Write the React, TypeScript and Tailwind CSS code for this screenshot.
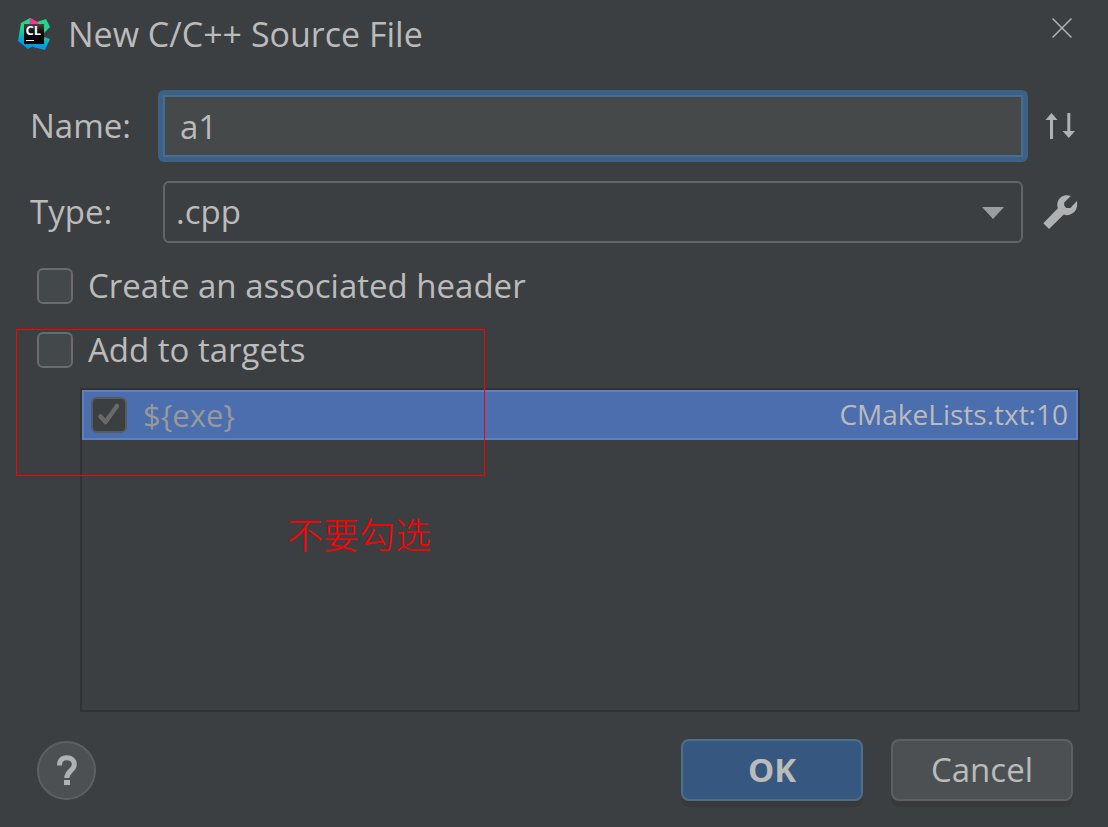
import { useState } from "react";
import type { InputHTMLAttributes } from "react";

function ClionLogo() {
  return (
    <svg viewBox="0 0 32 32" className="size-8 shrink-0" aria-hidden="true">
      <defs>
        <linearGradient id="leftSide" x1="0.4" y1="0" x2="0.3" y2="1">
          <stop offset="0.35" stopColor="#21d789" />
          <stop offset="0.8" stopColor="#009ae5" />
        </linearGradient>
        <linearGradient id="rightSide" x1="0.6" y1="0" x2="0.4" y2="1">
          <stop offset="0.4" stopColor="#21d789" />
          <stop offset="0.85" stopColor="#009ae5" />
        </linearGradient>
        <linearGradient id="face" x1="0" y1="0" x2="0" y2="1">
          <stop offset="0" stopColor="#444" />
          <stop offset="0.5" stopColor="#000" />
        </linearGradient>
      </defs>
      <path d="M12 0 3 5 0 23l10 8 7-4V3z" fill="url(#leftSide)" />
      <path d="m19 4 9-3 4 8-6 6v4l6 2-5 11-12-3-2-6 6-8z" fill="url(#rightSide)" />
      <path d="m12 0 8 4v6h-9z" fill="#ff318c" />
      <path d="M6 6h20v20H6z" fill="url(#face)" />
      <text x="7.5" y="17" fill="#fff" fontSize="13" fontWeight="700" fontFamily="Open Sans, sans-serif">
        CL
      </text>
      <path d="M8 22h8v1H8z" fill="#fff" />
    </svg>
  );
}

function CloseIcon() {
  return (
    <svg viewBox="0 0 20 20" className="size-5" fill="none" stroke="#afb1b3" strokeWidth="1.5" aria-hidden="true">
      <path d="m.5.5 19 19M19.500.5l-19 19" />
    </svg>
  );
}

function SortIcon() {
  return (
    <svg viewBox="0 0 32 26" className="h-[26px] w-8" fill="#afb1b3" aria-hidden="true">
      <path d="M7.500 0 13.500 7H9V26H6V7H1.500zM23.300 0h3v18H31l-6.200 7-6.200-7h4.700z" />
    </svg>
  );
}

function WrenchIcon() {
  return (
    <svg viewBox="0 0 36 36" className="size-9" fill="#afb1b3" aria-hidden="true">
      <path d="M27.800 2C22.500-.2 17 2.200 15 7c-1 2.500-1 5-.1 7.300L.3 29.200 6 35l14.800-14.500c5 2 10.500-.8 12.400-5.400 1.100-2.600 1.200-5 .7-8L27.300 14h-4.100l-2-2.400V8.500z" />
    </svg>
  );
}

function CheckBox({ muted = false, ...props }: InputHTMLAttributes<HTMLInputElement> & { muted?: boolean }) {
  return (
    <span className="grid size-9 shrink-0 place-items-center">
      <input
        type="checkbox"
        className={
          muted
            ? "peer col-start-1 row-start-1 size-9 appearance-none rounded-md border-2 border-[#585a5b] bg-[#3c3f41]"
            : "peer col-start-1 row-start-1 size-9 appearance-none rounded-md border-2 border-[#6b6b6b] bg-[#43494a]"
        }
        {...props}
      />
      <svg
        viewBox="0 0 36 36"
        className="pointer-events-none invisible col-start-1 row-start-1 size-9 peer-checked:visible"
        fill="none"
        stroke="#696969"
        strokeWidth="4.500"
        strokeLinecap="round"
        strokeLinejoin="round"
        aria-hidden="true"
      >
        <path d="m9.500 19.500 5 5.500L26 9" />
      </svg>
    </span>
  );
}

export default function App() {
  const [name, setName] = useState("a1");
  const [header, setHeader] = useState(false);
  const [targets, setTargets] = useState(false);

  return (
    <main className="relative flex min-h-screen flex-col bg-[#3c3f41] pb-[26px] font-['Open_Sans','Noto_Sans_CJK_SC',sans-serif] text-[33px] leading-[48px] text-[#bbbbbb]">
      <header className="flex h-[90px] items-start gap-[18px] pr-9 pl-[18px]">
        <div className="flex flex-1 items-center gap-[18px] pt-2.5">
          <ClionLogo />
          <h1 className="text-[34px]">New C/C++ Source File</h1>
        </div>
        <button type="button" aria-label="Close" className="mt-[18px]">
          <CloseIcon />
        </button>
      </header>

      <div className="grid grid-cols-[128px_minmax(0,1fr)_80px] items-center gap-y-[19px] pl-[30px]">
        <label htmlFor="name">Name:</label>
        <div className="h-[72px] rounded-md bg-[#3d6185] p-[5px]">
          <input
            id="name"
            type="text"
            value={name}
            onChange={(e) => setName(e.target.value)}
            className="h-full w-full border-2 border-[#466d94] bg-[#45494a] px-[15px] outline-none"
          />
        </div>
        <button type="button" aria-label="Swap file kind" className="ml-4 justify-self-start">
          <SortIcon />
        </button>

        <label htmlFor="type">Type:</label>
        <div className="grid items-center px-[5px]">
          <select
            id="type"
            className="col-start-1 row-start-1 h-[62px] w-full appearance-none rounded-md border-2 border-[#646464] bg-[#3c3f41] px-[11px] outline-none"
          >
            <option>.cpp</option>
          </select>
          <svg
            viewBox="0 0 22 14"
            className="pointer-events-none col-start-1 row-start-1 mr-[19px] h-3.5 w-[22px] justify-self-end"
            fill="#9a9da0"
            aria-hidden="true"
          >
            <path d="M0 2h22L11 14z" />
          </svg>
        </div>
        <button type="button" aria-label="Edit file types" className="ml-[15px] justify-self-start">
          <WrenchIcon />
        </button>
      </div>

      <div className="mt-[19px] flex flex-col items-start gap-4 pl-[37px]">
        <label className="flex items-center gap-[15px]">
          <CheckBox checked={header} onChange={(e) => setHeader(e.target.checked)} />
          Create an associated header
        </label>
        <label className="flex items-center gap-[15px]">
          <CheckBox checked={targets} onChange={(e) => setTargets(e.target.checked)} />
          Add to targets
        </label>
      </div>

      <ul className="mt-3.5 mr-7 mb-[27px] ml-20 min-h-40 flex-1 border-2 border-[#323232]">
        <li className="flex h-[50px] items-center justify-between border-2 border-[#5f7fbf] bg-[#4b6eaf] pr-2 pl-[7px] leading-[44px]">
          <label className="flex items-center gap-4 text-[31px] text-[#999999]">
            <CheckBox muted checked disabled readOnly />
            {"${exe}"}
          </label>
          <span className="pb-0.5 text-[28px]">CMakeLists.txt:10</span>
        </li>
      </ul>

      <footer className="flex items-center gap-7 pr-[35px] pl-[37px]">
        <button
          type="button"
          aria-label="Help"
          className="mr-auto grid size-[59px] place-items-center rounded-full border-2 border-[#5e6060] bg-[#4c5052]"
        >
          <svg viewBox="0 0 22 30" className="h-[30px] w-[22px]" fill="none" aria-hidden="true">
            <path
              d="M3.500 10.500C3.500 5.500 6 2.800 10.800 2.800c4.700 0 7.500 2.600 7.500 6.700 0 6-7.500 6.500-7.500 13.500"
              stroke="#afb1b3"
              strokeWidth="5"
            />
            <path d="M8 25h6v5H8z" fill="#afb1b3" />
          </svg>
        </button>
        <button
          type="button"
          className="h-[62px] w-[182px] rounded-lg border-2 border-[#4c708c] bg-[#365880] font-bold shadow-[0_6px_0_#38393a]"
        >
          OK
        </button>
        <button
          type="button"
          className="h-[62px] w-[182px] rounded-lg border-2 border-[#5e6060] bg-[#4c5052] shadow-[0_6px_0_#38393a]"
        >
          Cancel
        </button>
      </footer>

      <div className="pointer-events-none absolute top-[329px] left-4 h-[147px] w-[469px] border border-[#ff0000]" />
      <p className="pointer-events-none absolute top-[509px] left-[287px] font-['Noto_Sans_CJK_SC',sans-serif] text-[36px] font-light text-[#ff0000]">
        不要勾选
      </p>
    </main>
  );
}
